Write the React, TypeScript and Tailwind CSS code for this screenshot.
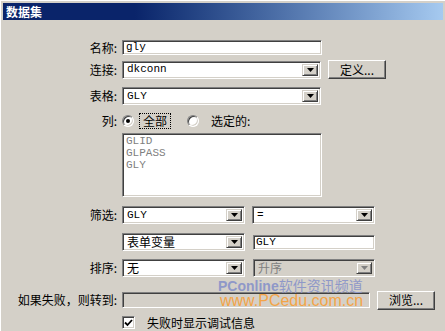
const cjk = { fontFamily: '"Noto Sans CJK SC", "Liberation Sans", sans-serif' };

const Sunken = ({ className = '', children }: { className?: string; children?: React.ReactNode }) => (
  <div
    className={`border border-t-[#808080] border-l-[#808080] border-b-white border-r-white shadow-[inset_1px_1px_0_#404040,inset_-1px_-1px_0_#d4d0c8] ${className}`}
  >
    {children}
  </div>
);

const Arrow = ({ disabled = false }: { disabled?: boolean }) => (
  <div className="w-[16px] h-full bg-[#d4d0c8] border border-t-[#d4d0c8] border-l-[#d4d0c8] border-b-[#404040] border-r-[#404040] shadow-[inset_1px_1px_0_#fff,inset_-1px_-1px_0_#808080] flex items-center justify-center">
    <svg width="7" height="4" viewBox="0 0 7 4">
      <path d="M0 0h7L3.5 4z" fill={disabled ? '#808080' : '#000'} />
    </svg>
  </div>
);

const Select = ({
  value,
  className = '',
  mono = false,
  disabled = false,
}: {
  value: string;
  className?: string;
  mono?: boolean;
  disabled?: boolean;
}) => (
  <Sunken className={`flex items-stretch ${disabled ? 'bg-[#d4d0c8]' : 'bg-white'} ${className}`}>
    <div
      className={`flex-1 flex items-center pl-[4px] ${mono ? 'text-[11px]' : 'text-[12px]'} ${disabled ? 'text-[#808080]' : 'text-black'}`}
      style={mono ? { fontFamily: '"Liberation Mono", monospace' } : cjk}
    >
      {value}
    </div>
    <div className="p-[2px] pl-0">
      <Arrow disabled={disabled} />
    </div>
  </Sunken>
);

const Button = ({ label, className = '' }: { label: string; className?: string }) => (
  <div
    className={`bg-[#d4d0c8] border border-t-white border-l-white border-b-[#404040] border-r-[#404040] shadow-[inset_-1px_-1px_0_#808080] flex items-center justify-center text-[12px] text-black ${className}`}
    style={cjk}
  >
    {label}
  </div>
);

const Label = ({ text }: { text: string }) => (
  <div className="w-[119px] pr-[2px] text-right text-[12px] text-black shrink-0" style={cjk}>
    {text}
  </div>
);

const Radio = ({ checked }: { checked?: boolean }) => (
  <div className="w-[12px] h-[12px] rounded-full bg-white border border-t-[#808080] border-l-[#808080] border-b-white border-r-white shadow-[inset_1px_1px_0_#404040,inset_-1px_-1px_0_#d4d0c8] flex items-center justify-center">
    {checked && <div className="w-[4px] h-[4px] rounded-full bg-black" />}
  </div>
);

export default function App() {
  return (
    <div className="w-[445px] h-[331px] bg-[#d4d0c8] overflow-hidden relative border-t border-l border-white">
      <div className="pt-[2px] pl-[2px] pr-[2px]">
        <div className="h-[17px] bg-linear-to-r from-[#0a246a] via-[#0a246a] via-30% to-[#a6caf0] flex items-center pl-[3px]">
          <span className="text-white text-[12px] font-bold" style={cjk}>数据集</span>
        </div>
      </div>

      <div className="flex flex-col -ml-[1px]">
        {/* 名称 */}
        <div className="flex items-center mt-[20px] h-[15px]">
          <Label text="名称:" />
          <Sunken className="ml-[3px] w-[200px] h-[15px] bg-white flex items-center pl-[3px]">
            <span className="text-[11px] text-black" style={{ fontFamily: '"Liberation Mono", monospace' }}>gly</span>
          </Sunken>
        </div>

        {/* 连接 */}
        <div className="flex items-center mt-[5px] h-[19px]">
          <Label text="连接:" />
          <Select value="dkconn" mono className="ml-[3px] w-[199px] h-[18px]" />
          <Button label="定义..." className="ml-[7px] w-[58px] h-[19px]" />
        </div>

        {/* 表格 */}
        <div className="flex items-center mt-[8px] h-[18px]">
          <Label text="表格:" />
          <Select value="GLY" mono className="ml-[3px] w-[199px] h-[18px]" />
        </div>

        {/* 列 */}
        <div className="flex items-center mt-[8px] h-[16px]">
          <Label text="列:" />
          <div className="ml-[3px] flex items-center">
            <Radio checked />
            <div className="ml-[5px] px-[3px] border border-dotted border-black text-[12px] leading-[14px]" style={cjk}>全部</div>
            <div className="ml-[16px]"><Radio /></div>
            <div className="ml-[12px] text-[12px]" style={cjk}>选定的:</div>
          </div>
        </div>

        {/* 列表 */}
        <div className="flex mt-[4px]">
          <div className="w-[122px] shrink-0" />
          <Sunken className="w-[200px] h-[64px] bg-white pl-[3px] pt-[1px]">
            <div className="text-[11px] leading-[12px] text-[#808080]" style={{ fontFamily: '"Liberation Mono", monospace' }}>
              <div>GLID</div>
              <div>GLPASS</div>
              <div>GLY</div>
            </div>
          </Sunken>
        </div>

        {/* 筛选 */}
        <div className="flex items-center mt-[9px] h-[18px]">
          <Label text="筛选:" />
          <Select value="GLY" mono className="ml-[3px] w-[123px] h-[18px]" />
          <Select value="=" mono className="ml-[7px] w-[123px] h-[18px]" />
        </div>

        {/* 表单变量 */}
        <div className="flex items-center mt-[9px] h-[18px]">
          <div className="w-[122px] shrink-0" />
          <Select value="表单变量" className="w-[123px] h-[18px]" />
          <Sunken className="ml-[8px] w-[122px] h-[15px] bg-white flex items-center pl-[2px]">
            <span className="text-[11px] text-black" style={{ fontFamily: '"Liberation Mono", monospace' }}>GLY</span>
          </Sunken>
        </div>

        {/* 排序 */}
        <div className="flex items-center mt-[8px] h-[18px]">
          <Label text="排序:" />
          <Select value="无" className="ml-[3px] w-[123px] h-[18px]" />
          <Select value="升序" disabled className="ml-[8px] w-[122px] h-[18px]" />
        </div>

        {/* 如果失败 */}
        <div className="flex items-center mt-[14px] h-[18px]">
          <Label text="如果失败，则转到:" />
          <Sunken className="ml-[3px] w-[248px] h-[16px] bg-[#d4d0c8]" />
          <Button label="浏览..." className="ml-[7px] w-[58px] h-[19px]" />
        </div>

        {/* 调试 */}
        <div className="flex items-center mt-[7px] h-[13px]">
          <div className="w-[122px] shrink-0" />
          <Sunken className="w-[13px] h-[13px] bg-white flex items-center justify-center">
            <svg width="9" height="8" viewBox="0 0 9 8">
              <path d="M1 3.5l2.5 2.5L8 1" stroke="#000" strokeWidth="1.8" fill="none" />
            </svg>
          </Sunken>
          <div className="ml-[12px] text-[12px]" style={cjk}>失败时显示调试信息</div>
        </div>
      </div>

      {/* watermark */}
      <div className="absolute left-[217px] top-[276px] text-[14px] font-bold text-[#8f98c8] leading-[16px] whitespace-nowrap" style={cjk}>
        <span style={{ fontFamily: '"Liberation Sans", sans-serif' }}>PConline</span>
        <span className="font-normal">软件资讯频道</span>
      </div>
      <div className="absolute left-[219px] top-[291px] text-[16px] text-[#f3a448] leading-[17px] whitespace-nowrap" style={{ fontFamily: '"Liberation Sans", sans-serif' }}>
        www.PCedu.com.cn
      </div>
    </div>
  );
}
